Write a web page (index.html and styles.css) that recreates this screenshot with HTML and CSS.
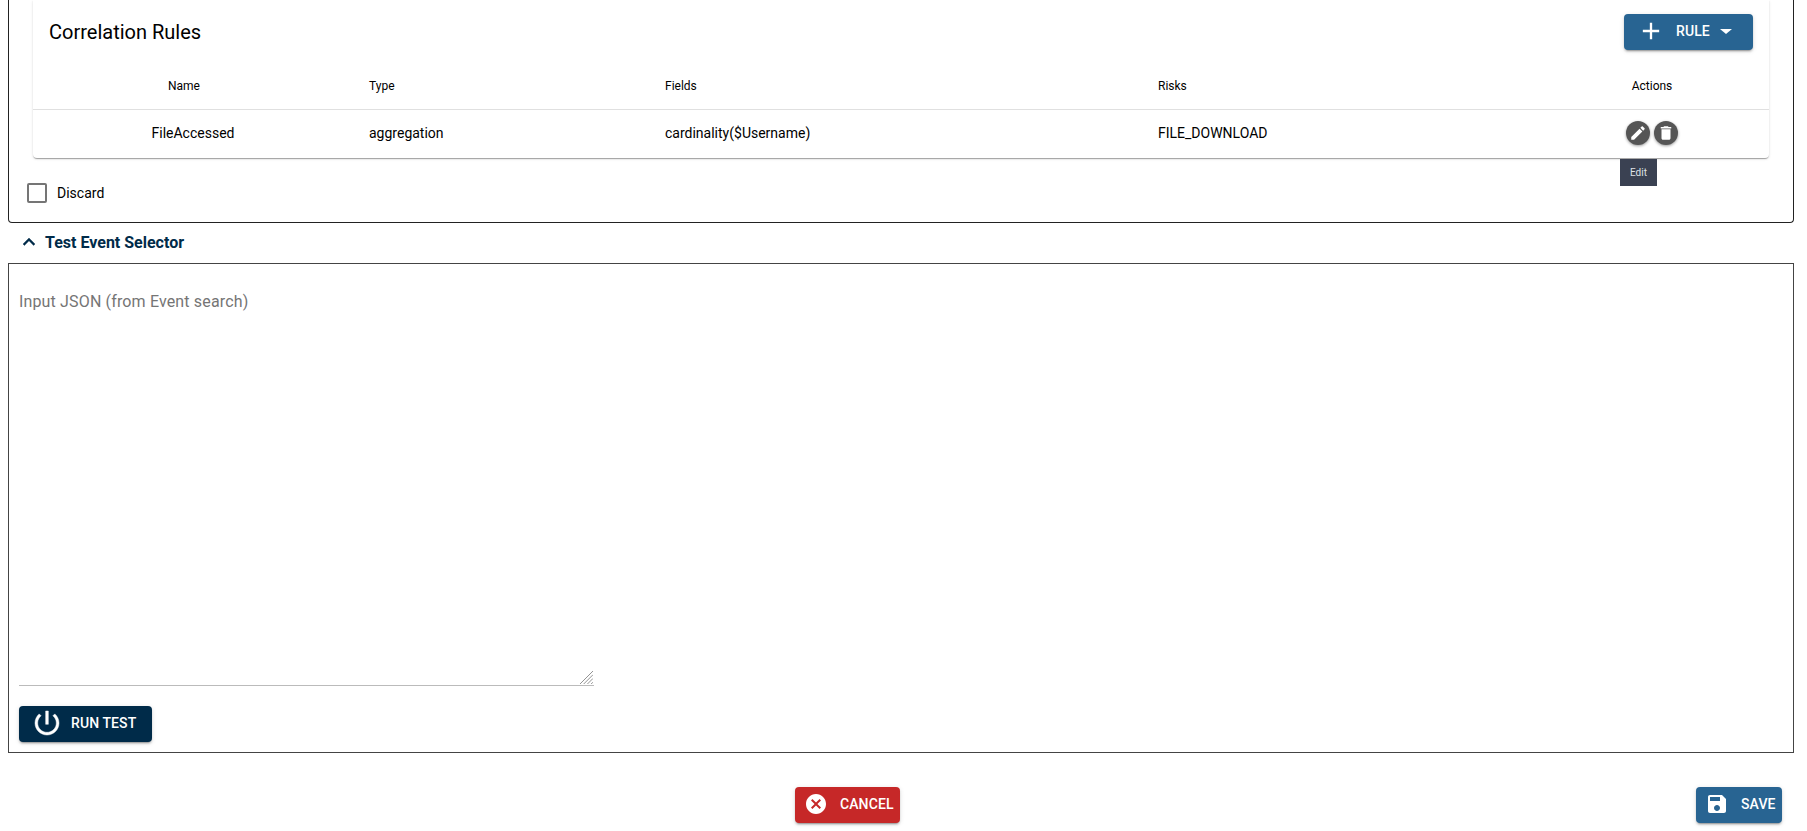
FILE: index.html
```html
<!DOCTYPE html>
<html>
  <head>
    <meta charset="utf-8" />
    <title>Correlation Rules</title>
    <link rel="stylesheet" href="styles.css">
  </head>
  <body>
    <section class="rulesPanel">
      <div class="rulesCard">
        <div class="rulesCard__header">
          <h2 class="rulesCard__title">Correlation Rules</h2>
          <button class="button button--blue button--rule" type="button">
            <svg class="button__plus" viewBox="0 0 24 24"><path d="M19 13h-6v6h-2v-6H5v-2h6V5h2v6h6v2z"></path></svg>
            <span>RULE</span>
            <span class="button__caret"></span>
          </button>
        </div>
        <table class="rulesTable">
          <colgroup>
            <col class="rulesTable__colName">
            <col class="rulesTable__colType">
            <col class="rulesTable__colFields">
            <col class="rulesTable__colRisks">
            <col class="rulesTable__colActions">
          </colgroup>
          <thead>
            <tr>
              <th class="rulesTable__name"><span class="rulesTable__nameHead">Name</span></th>
              <th>Type</th>
              <th>Fields</th>
              <th>Risks</th>
              <th class="rulesTable__actions">Actions</th>
            </tr>
          </thead>
          <tbody>
            <tr>
              <td class="rulesTable__name">FileAccessed</td>
              <td>aggregation</td>
              <td>cardinality($Username)</td>
              <td>FILE_DOWNLOAD</td>
              <td class="rulesTable__actions">
                <div class="iconButtons">
                  <button class="iconButton" type="button">
                    <svg viewBox="0 0 24 24"><path d="M3 17.25V21h3.75L17.81 9.94l-3.75-3.75L3 17.25zM20.71 7.04c.39-.39.39-1.02 0-1.41l-2.34-2.34c-.39-.39-1.02-.39-1.41 0l-1.83 1.83 3.75 3.75 1.83-1.83z"></path></svg>
                    <span class="tooltip">Edit</span>
                  </button>
                  <button class="iconButton" type="button">
                    <svg viewBox="0 0 24 24"><path d="M6 19c0 1.1.9 2 2 2h8c1.1 0 2-.9 2-2V7H6v12zM19 4h-3.5l-1-1h-5l-1 1H5v2h14V4z"></path></svg>
                  </button>
                </div>
              </td>
            </tr>
          </tbody>
        </table>
      </div>
      <label class="discard">
        <span class="discard__box"></span>
        <span>Discard</span>
      </label>
    </section>

    <div class="sectionHead">
      <svg class="sectionHead__icon" viewBox="0 0 24 24"><path d="M12 8l-6 6 1.41 1.41L12 10.83l4.59 4.58L18 14z"></path></svg>
      <span>Test Event Selector</span>
    </div>

    <section class="testPanel">
      <div class="testPanel__field">
        <textarea class="testPanel__input" placeholder="Input JSON (from Event search)"></textarea>
        <svg class="testPanel__grip" viewBox="0 0 14 14"><path d="M0 14L14 0M4 14L14 4M8 14L14 8M12 14L14 12"></path></svg>
      </div>
      <button class="button button--navy button--run" type="button">
        <svg class="button__power" viewBox="0 0 24 24"><path d="M13 3h-2v10h2V3zm4.83 2.17l-1.42 1.42C17.99 7.86 19 9.81 19 12c0 3.87-3.13 7-7 7s-7-3.13-7-7c0-2.19 1.01-4.14 2.58-5.42L6.17 5.17C4.23 6.82 3 9.26 3 12c0 4.97 4.03 9 9 9s9-4.03 9-9c0-2.74-1.23-5.18-3.17-6.83z"></path></svg>
        <span>RUN TEST</span>
      </button>
    </section>

    <div class="footer">
      <button class="button button--red button--cancel" type="button">
        <svg class="button__icon" viewBox="0 0 24 24"><path d="M12 2C6.47 2 2 6.47 2 12s4.47 10 10 10 10-4.47 10-10S17.53 2 12 2zm5 13.59L15.59 17 12 13.41 8.41 17 7 15.59 10.59 12 7 8.41 8.41 7 12 10.59 15.59 7 17 8.41 13.41 12 17 15.59z"></path></svg>
        <span>CANCEL</span>
      </button>
      <button class="button button--blue button--save" type="button">
        <svg class="button__icon" viewBox="0 0 24 24"><path d="M17 3H5c-1.11 0-2 .9-2 2v14c0 1.1.89 2 2 2h14c1.1 0 2-.9 2-2V7l-4-4zm-5 16c-1.66 0-3-1.34-3-3s1.34-3 3-3 3 1.34 3 3-1.34 3-3 3zm3-10H5V5h10v4z"></path></svg>
        <span>SAVE</span>
      </button>
    </div>
  </body>
</html>
```

FILE: styles.css
```css
html, body {
  height: 100%;
}

body {
  margin: 0;
  padding: 0 13px 0 8px;
  box-sizing: border-box;
  overflow: hidden;
  background-color: #fff;
  color: #000;
  font-family: Roboto, sans-serif;
  font-size: 14px;
}

/* buttons */
.button {
  display: flex;
  align-items: center;
  box-sizing: border-box;
  height: 36px;
  padding: 0 0 2px;
  border: none;
  border-radius: 4px;
  color: #fff;
  font-family: Roboto, sans-serif;
  font-size: 14px;
  font-weight: 500;
  letter-spacing: .1px;
  box-shadow: 0 3px 1px -2px rgba(0,0,0,.2), 0 2px 2px 0 rgba(0,0,0,.14), 0 1px 5px 0 rgba(0,0,0,.12);
}

.button svg {
  fill: #fff;
  flex: none;
}

.button--blue {
  background-color: #286492;
}

.button--navy {
  background-color: #002b49;
}

.button--red {
  background-color: #c62828;
}

.button__icon {
  width: 24px;
  height: 24px;
}

/* top panel, its upper edge is scrolled away */
.rulesPanel {
  box-sizing: border-box;
  height: 223px;
  padding: 0 24px;
  border: 1px solid #222;
  border-top: none;
  border-radius: 0 0 4px 4px;
}

.rulesCard {
  border-radius: 0 0 4px 4px;
  background-color: #fff;
  box-shadow: 0 2px 1px -1px rgba(0,0,0,.2), 0 1px 1px 0 rgba(0,0,0,.14), 0 1px 3px 0 rgba(0,0,0,.12);
}

.rulesCard__header {
  display: flex;
  align-items: center;
  justify-content: space-between;
  height: 64px;
  padding: 0 16px;
}

.rulesCard__title {
  margin: 0;
  font-size: 20px;
  font-weight: 400;
}

.button--rule {
  width: 129px;
  padding-left: 15px;
}

.button__plus {
  width: 28px;
  height: 28px;
  margin: 0 11px 0 -2px;
}

.button__caret {
  width: 0;
  height: 0;
  margin-left: 10px;
  border-left: 6px solid transparent;
  border-right: 6px solid transparent;
  border-top: 5px solid #fff;
}

.rulesTable {
  width: 100%;
  table-layout: fixed;
  border-collapse: collapse;
}

.rulesTable__colName {
  width: 320px;
}

.rulesTable__colType {
  width: 296px;
}

.rulesTable__colFields {
  width: 493px;
}

.rulesTable__colRisks {
  width: 393px;
}

.rulesTable th {
  height: 45px;
  padding: 0 16px;
  box-sizing: border-box;
  border-bottom: 1px solid #e0e0e0;
  font-size: 12px;
  font-weight: 400;
  text-align: left;
}

.rulesTable td {
  height: 49px;
  padding: 0 16px 1px;
  box-sizing: border-box;
  font-size: 14px;
}

.rulesTable .rulesTable__name, .rulesTable .rulesTable__actions {
  text-align: center;
}

/* room for the hidden sort arrow */
.rulesTable__nameHead {
  margin-right: 18px;
}

.iconButtons {
  display: flex;
  justify-content: center;
  gap: 4px;
}

.iconButton {
  position: relative;
  display: flex;
  align-items: center;
  justify-content: center;
  width: 24px;
  height: 24px;
  padding: 0;
  border: none;
  border-radius: 50%;
  background-color: #555;
  box-shadow: 0 1px 3px rgba(0,0,0,.4);
}

.iconButton svg {
  width: 18px;
  height: 18px;
  fill: #fff;
}

.tooltip {
  position: absolute;
  top: 38px;
  left: -6px;
  width: 37px;
  height: 27px;
  background-color: #3a4152;
  color: #dfe1e6;
  font-family: Roboto, sans-serif;
  font-size: 10px;
  line-height: 27px;
  text-align: center;
}

.discard {
  display: flex;
  align-items: center;
  gap: 10px;
  margin: 25px 0 0 -6px;
  line-height: 19px;
}

.discard__box {
  box-sizing: border-box;
  width: 20px;
  height: 20px;
  border: 2px solid #757575;
  border-radius: 2px;
}

/* test section */
.sectionHead {
  display: flex;
  align-items: center;
  height: 40px;
  padding: 0 0 2px 9px;
  box-sizing: border-box;
  color: #002b49;
  font-size: 16px;
  font-weight: 700;
}

.sectionHead__icon {
  width: 24px;
  height: 24px;
  margin-right: 4px;
  fill: #002b49;
  stroke: #002b49;
  stroke-width: .4;
}

.testPanel {
  box-sizing: border-box;
  height: 490px;
  padding: 26px 10px 0;
  border: 1px solid #444;
}

.testPanel__field {
  position: relative;
  width: 575px;
  height: 396px;
}

.testPanel__input {
  display: block;
  box-sizing: border-box;
  width: 100%;
  height: 100%;
  padding: 2px 0;
  border: none;
  border-bottom: 1px solid #bbb;
  outline: none;
  font-family: Roboto, sans-serif;
  font-size: 16px;
  letter-spacing: .15px;
  resize: none;
}

.testPanel__input::placeholder {
  color: #757575;
  opacity: 1;
}

.testPanel__grip {
  position: absolute;
  right: 1px;
  bottom: 2px;
  width: 13px;
  height: 13px;
  fill: none;
  stroke: #8a8a8a;
  stroke-width: 1;
}

.button--run {
  width: 133px;
  margin-top: 20px;
  padding-left: 12px;
  gap: 8px;
}

.button__power {
  width: 32px;
  height: 32px;
  stroke: #fff;
  stroke-width: .35;
}

.footer {
  display: flex;
  margin-top: 34px;
  padding: 0 12px 0 787px;
}

.button--cancel {
  width: 105px;
  padding-left: 9px;
  gap: 12px;
}

.button--save {
  width: 86px;
  margin-left: auto;
  padding-left: 9px;
  gap: 12px;
}
```
